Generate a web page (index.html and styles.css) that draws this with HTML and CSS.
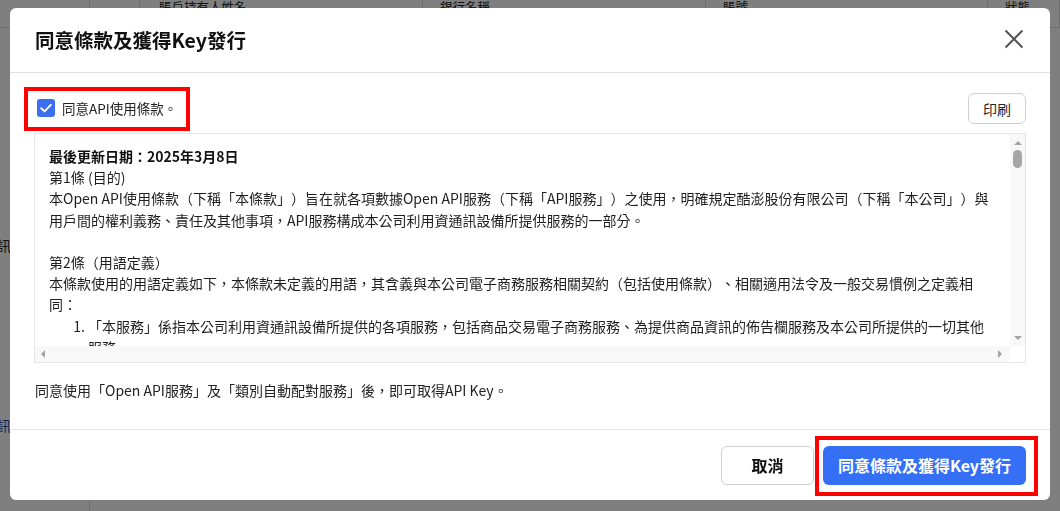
FILE: index.html
```html
<!DOCTYPE html>
<html lang="zh-Hant">
<head>
<meta charset="utf-8">
<title>同意條款及獲得Key發行</title>
<link rel="stylesheet" href="styles.css">
</head>
<body>
<div class="bg">
  <div class="bg-head">
    <div class="bg-cell"></div>
    <div class="bg-cell"></div>
    <div class="bg-cell bg-cell-wide">賬戶持有人姓名</div>
    <div class="bg-cell">銀行名稱</div>
    <div class="bg-cell">賬號</div>
    <div class="bg-cell">狀態</div>
  </div>
  <div class="bg-rows">
    <div class="bg-row"><span class="bg-text">資訊</span></div>
    <div class="bg-row"><span class="bg-text bg-link">資訊</span></div>
  </div>
</div>

<div class="overlay">
  <div class="modal">
    <div class="modal-header">
      <h1 class="modal-title">同意條款及獲得Key發行</h1>
      <button class="close-btn" aria-label="close">
        <svg width="20" height="20" viewBox="0 0 20 20"><path d="M1.5 1.5 L18.5 18.5 M18.5 1.5 L1.5 18.5" stroke="#555" stroke-width="2" fill="none"/></svg>
      </button>
    </div>

    <div class="modal-body">
      <div class="agree-row">
        <label class="agree">
          <span class="checkbox">
            <svg width="18" height="18" viewBox="0 0 18 18"><rect width="18" height="18" rx="3" fill="#3a6ff0"/><path d="M4.2 9.2 L7.6 12.4 L13.8 5.8" stroke="#fff" stroke-width="1.9" fill="none" stroke-linecap="round" stroke-linejoin="round"/></svg>
          </span>
          <span class="agree-text">同意API使用條款。</span>
        </label>
        <button class="print-btn">印刷</button>
      </div>

      <div class="terms">
        <div class="terms-content">
          <p class="t-bold">最後更新日期：2025年3月8日</p>
          <p>第1條 (目的)</p>
          <p>本Open API使用條款（下稱「本條款」）旨在就各項數據Open API服務（下稱「API服務」）之使用，明確規定酷澎股份有限公司（下稱「本公司」）與用戶間的權利義務、責任及其他事項，API服務構成本公司利用資通訊設備所提供服務的一部分。</p>
          <p class="t-gap">第2條（用語定義）</p>
          <p>本條款使用的用語定義如下，本條款未定義的用語，其含義與本公司電子商務服務相關契約（包括使用條款）、相關適用法令及一般交易慣例之定義相同：</p>
          <ol class="t-list">
            <li>「本服務」係指本公司利用資通訊設備所提供的各項服務，包括商品交易電子商務服務、為提供商品資訊的佈告欄服務及本公司所提供的一切其他服務。</li>
            <li>「API」係指應用程式介面。</li>
          </ol>
        </div>
        <div class="vbar">
          <span class="arrow arrow-up"></span>
          <span class="thumb"></span>
          <span class="arrow arrow-down"></span>
        </div>
        <div class="hbar">
          <span class="arrow arrow-left"></span>
          <span class="arrow arrow-right"></span>
        </div>
        <div class="corner"></div>
      </div>

      <p class="note">同意使用「Open API服務」及「類別自動配對服務」後，即可取得API Key。</p>
    </div>

    <div class="modal-footer">
      <button class="btn btn-cancel">取消</button>
      <button class="btn btn-primary">同意條款及獲得Key發行</button>
    </div>
  </div>
</div>
</body>
</html>
```

FILE: styles.css
```css
* { box-sizing: border-box; }

html, body {
  margin: 0;
  padding: 0;
  width: 1060px;
  height: 511px;
  overflow: hidden;
  font-family: "Noto Sans CJK TC", "Noto Sans", sans-serif;
  background: #fff;
  color: #222;
  text-spacing-trim: space-all;
}

/* ---------- background page ---------- */
.bg {
  width: 1060px;
  height: 511px;
  overflow: hidden;
}
.bg-head {
  display: grid;
  grid-template-columns: 90px 50px 283px 283px 282px 1fr;
  height: 42px;
  margin-top: -14px;
  border-bottom: 1px solid #ddd;
  background: #fff;
}
.bg-cell {
  border-right: 1px solid #ddd;
  font-size: 12.5px;
  line-height: 14px;
  padding: 14px 0 0 17px;
  color: #222;
  white-space: nowrap;
}
.bg-cell-wide { padding-left: 19px; }
.bg-rows {
  display: flex;
  flex-direction: column;
  gap: 140px;
  padding-top: 197px;
  width: 90px;
  height: 600px;
  border-right: 1px solid #ddd;
}
.bg-row {
  height: 40px;
  display: flex;
  align-items: center;
}
.bg-text {
  font-size: 14px;
  margin-left: -17px;
  color: #222;
  white-space: nowrap;
}
.bg-link { color: #2a4fb0; }

/* ---------- overlay & modal ---------- */
.overlay {
  position: fixed;
  inset: 0;
  background: rgba(0, 0, 0, 0.5);
  display: flex;
  padding: 8px 10px 11px 10px;
}
.modal {
  flex: 1;
  background: #fff;
  border-radius: 6px;
  display: flex;
  flex-direction: column;
  overflow: hidden;
}

.modal-header {
  height: 65px;
  flex: none;
  display: flex;
  align-items: center;
  justify-content: space-between;
  padding: 0 26px 0 25px;
  border-bottom: 1px solid #e2e2e2;
}
.modal-title {
  margin: 0;
  font-size: 19.5px;
  font-weight: 700;
  color: #111;
  padding-bottom: 2px;
}
.close-btn {
  border: 0;
  background: none;
  padding: 0;
  width: 20px;
  height: 20px;
  display: flex;
  margin-bottom: 2px;
}

.modal-body {
  flex: 1;
  display: flex;
  flex-direction: column;
  padding: 14px 24px 0 24px;
}

.agree-row {
  display: flex;
  justify-content: space-between;
  align-items: flex-start;
}
.agree {
  position: relative;
  display: flex;
  align-items: center;
  margin: 12px 0 0 3px;
  height: 18px;
  gap: 7px;
}
.agree::after {
  content: "";
  position: absolute;
  top: -12px;
  left: -13px;
  width: 158px;
  height: 36px;
  border: 4px solid #ff0000;
  pointer-events: none;
}
.checkbox { display: flex; width: 18px; height: 18px; }
.agree-text {
  font-size: 13.5px;
  color: #222;
  line-height: 18px;
}
.print-btn {
  margin-top: 6px;
  width: 58px;
  height: 31px;
  border: 1px solid #cfcfcf;
  border-radius: 6px;
  background: #fff;
  font-family: inherit;
  font-size: 14px;
  color: #222;
  padding: 0;
}

/* ---------- terms box ---------- */
.terms {
  margin-top: 9px;
  height: 230px;
  border: 1px solid #e6e6e6;
  display: grid;
  grid-template-columns: 1fr 15px;
  grid-template-rows: 1fr 16px;
  overflow: hidden;
}
.terms-content {
  grid-column: 1;
  grid-row: 1;
  overflow: hidden;
  padding: 12px 14px 0 14px;
  font-size: 14px;
  line-height: 21.2px;
  color: #1e1e1e;
}
.terms-content p { margin: 0; }
.t-bold { font-weight: 700; color: #111; }
.t-gap { margin-top: 21.2px !important; }
.t-list {
  margin: 0;
  padding-left: 39px;
}

.vbar {
  grid-column: 2;
  grid-row: 1;
  background: #f8f8f8;
  display: flex;
  flex-direction: column;
  align-items: center;
  padding-top: 7px;
}
.hbar {
  grid-column: 1;
  grid-row: 2;
  background: #f8f8f8;
  display: flex;
  align-items: center;
  justify-content: space-between;
  padding: 0 8px 0 6px;
}
.corner {
  grid-column: 2;
  grid-row: 2;
  background: #fff;
}
.arrow {
  width: 0;
  height: 0;
  display: block;
}
.arrow-up {
  border-left: 4px solid transparent;
  border-right: 4px solid transparent;
  border-bottom: 4px solid #a3a3a3;
}
.arrow-down {
  border-left: 4px solid transparent;
  border-right: 4px solid transparent;
  border-top: 4px solid #a3a3a3;
  margin-top: auto;
  margin-bottom: 6px;
}
.arrow-left {
  border-top: 4px solid transparent;
  border-bottom: 4px solid transparent;
  border-right: 4px solid #a3a3a3;
}
.arrow-right {
  border-top: 4px solid transparent;
  border-bottom: 4px solid transparent;
  border-left: 4px solid #a3a3a3;
}
.thumb {
  display: block;
  width: 9px;
  height: 18px;
  border-radius: 5px;
  background: #a6a6a6;
  margin-top: 5px;
}

.note {
  margin: 17px 0 0 1px;
  font-size: 14px;
  line-height: 21px;
  color: #222;
}

/* ---------- footer ---------- */
.modal-footer {
  height: 71px;
  flex: none;
  border-top: 1px solid #e2e2e2;
  display: flex;
  align-items: center;
  justify-content: flex-end;
  padding: 0 24px 0 24px;
  gap: 9px;
}
.btn {
  height: 39px;
  border-radius: 6px;
  font-family: inherit;
  font-size: 16px;
  font-weight: 700;
  padding: 0;
}
.btn-cancel {
  width: 93px;
  border: 1px solid #cfcfcf;
  background: #fff;
  color: #111;
}
.btn-primary {
  width: 203px;
  border: 0;
  background: #346ff6;
  color: #fff;
  position: relative;
}
.btn-primary::after {
  content: "";
  position: absolute;
  top: -10px;
  left: -8px;
  right: -12px;
  bottom: -11px;
  border: 4px solid #ff0000;
  pointer-events: none;
}
```
